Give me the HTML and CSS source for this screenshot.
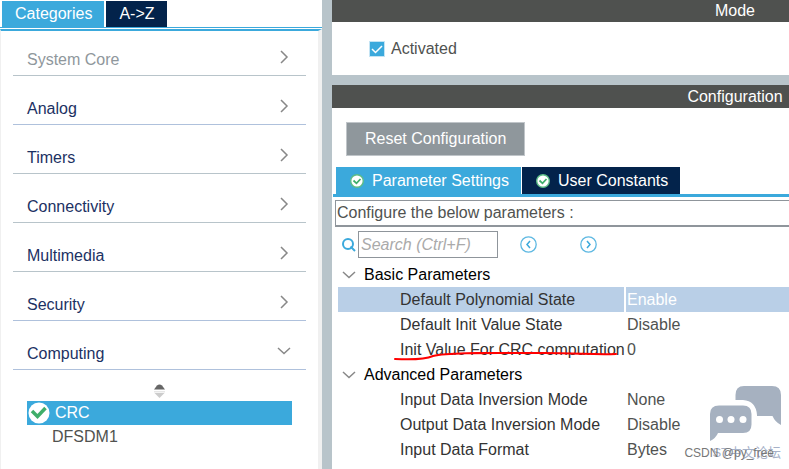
FILE: index.html
```html
<!DOCTYPE html>
<html lang="en">
<head>
    <meta charset="UTF-8">
    <meta name="viewport" content="width=device-width, initial-scale=1.0">
    <title>CRC Mode and Configuration</title>
    <link rel="stylesheet" href="styles.css">
</head>
<body>
    <!-- shared icons -->
    <svg class="sprite" width="0" height="0">
        <symbol id="chevron-right" viewBox="0 0 14 14">
            <path d="M4 1 L10 7 L4 13" fill="none" stroke="#888" stroke-width="1.5"/>
        </symbol>
        <symbol id="chevron-down" viewBox="0 0 14 14">
            <path d="M1 4 L7 9.500 L13 4" fill="none" stroke="#888" stroke-width="1.500"/>
        </symbol>
        <symbol id="check" viewBox="0 0 22 22">
            <circle cx="11" cy="11" r="10.500" fill="#fff"/>
            <path d="M4 9 L9.500 14.500 L17.500 6" fill="none" stroke="#3fae6a" stroke-width="3.500"/>
        </symbol>
        <symbol id="check-ring" viewBox="0 0 14 14">
            <circle cx="7" cy="7" r="6.300" fill="#fff" stroke="#5cbc86" stroke-width="1.400"/>
            <path d="M3.500 6.500 L6.500 9.300 L10.500 5" fill="none" stroke="#3fae6a" stroke-width="1.800"/>
        </symbol>
    </svg>

    <div class="layout">
        <aside class="sidebar">
            <div class="tabs sidebar-tabs">
                <button class="tab active">Categories</button>
                <button class="tab">A-&gt;Z</button>
            </div>
            <div class="sidebar-body">
                <ul class="categories">
                    <li class="category disabled">System Core<svg class="chevron"><use href="#chevron-right"/></svg></li>
                    <li class="category focused">Analog<svg class="chevron"><use href="#chevron-right"/></svg></li>
                    <li class="category">Timers<svg class="chevron"><use href="#chevron-right"/></svg></li>
                    <li class="category">Connectivity<svg class="chevron"><use href="#chevron-right"/></svg></li>
                    <li class="category">Multimedia<svg class="chevron"><use href="#chevron-right"/></svg></li>
                    <li class="category focused">Security<svg class="chevron"><use href="#chevron-right"/></svg></li>
                    <li class="category focused">Computing<svg class="chevron"><use href="#chevron-down"/></svg></li>
                </ul>
                <div class="peripherals">
                    <svg class="sorter" viewBox="0 0 11 14">
                        <path d="M0 5.500 L3 1.500 Q5.500 -0.500 8 1.500 L11 5.500 Z" fill="#666"/>
                        <path d="M0 7 H11 V8.500 H0 Z" fill="#e6e6e6"/>
                        <path d="M0.500 9 H10.500 L7 12.500 L5.500 14 L4 12.500 Z" fill="#ccc"/>
                    </svg>
                    <ul class="peripheral-list">
                        <li class="peripheral selected"><svg class="check"><use href="#check"/></svg>CRC</li>
                        <li class="peripheral">DFSDM1</li>
                    </ul>
                </div>
            </div>
        </aside>

        <main class="content">
            <section class="panel">
                <h2 class="panel-title">Mode</h2>
                <div class="mode-body">
                    <label class="activated"><input type="checkbox" checked>Activated</label>
                </div>
            </section>

            <section class="panel config">
                <h2 class="panel-title">Configuration</h2>
                <div class="config-body">
                    <button class="btn-reset">Reset Configuration</button>
                    <div class="tabs config-tabs">
                        <button class="tab active"><svg class="check-ring"><use href="#check-ring"/></svg>Parameter Settings</button>
                        <button class="tab"><svg class="check-ring"><use href="#check-ring"/></svg>User Constants</button>
                    </div>
                    <div class="settings">
                        <p class="hint">Configure the below parameters :</p>
                        <div class="search-bar">
                            <svg class="search-icon" viewBox="0 0 15 15">
                                <circle cx="7" cy="7" r="5" fill="none" stroke="#3ba9dc" stroke-width="2"/>
                                <path d="M9.500 9.500 L14 14" stroke="#3ba9dc" stroke-width="2"/>
                            </svg>
                            <input type="text" class="search" placeholder="Search (Ctrl+F)" aria-label="Search">
                            <button class="btn-nav" aria-label="Previous">
                                <svg viewBox="0 0 17 17"><circle cx="8.500" cy="8.500" r="7.700" fill="none" stroke="#5db8e2" stroke-width="1.300"/><path d="M10 5 L7 8.500 L10 12" fill="none" stroke="#3ba9dc" stroke-width="1.500"/></svg>
                            </button>
                            <button class="btn-nav" aria-label="Next">
                                <svg viewBox="0 0 17 17"><circle cx="8.500" cy="8.500" r="7.700" fill="none" stroke="#5db8e2" stroke-width="1.300"/><path d="M7 5 L10 8.500 L7 12" fill="none" stroke="#3ba9dc" stroke-width="1.500"/></svg>
                            </button>
                        </div>
                        <table class="params">
                            <colgroup>
                                <col class="col-name">
                                <col>
                            </colgroup>
                            <tbody>
                                <tr>
                                    <th colspan="2"><svg class="chevron"><use href="#chevron-down"/></svg>Basic Parameters</th>
                                </tr>
                                <tr class="selected">
                                    <td class="name">Default Polynomial State</td>
                                    <td class="value">Enable</td>
                                </tr>
                                <tr>
                                    <td class="name">Default Init Value State</td>
                                    <td class="value">Disable</td>
                                </tr>
                                <tr>
                                    <td class="name marked">Init Value For CRC computation
                                        <svg class="underline" viewBox="0 0 224 10"><path d="M1 7 C20 8 32 7 39 4 C55 0 100 1 150 1 C185 1 200 3 222 2" fill="none" stroke="#f00" stroke-width="2" stroke-linecap="round"/></svg>
                                    </td>
                                    <td class="value">0</td>
                                </tr>
                                <tr>
                                    <th colspan="2"><svg class="chevron"><use href="#chevron-down"/></svg>Advanced Parameters</th>
                                </tr>
                                <tr>
                                    <td class="name">Input Data Inversion Mode</td>
                                    <td class="value">None</td>
                                </tr>
                                <tr>
                                    <td class="name">Output Data Inversion Mode</td>
                                    <td class="value">Disable</td>
                                </tr>
                                <tr>
                                    <td class="name">Input Data Format</td>
                                    <td class="value">Bytes</td>
                                </tr>
                            </tbody>
                        </table>
                    </div>
                </div>
            </section>
        </main>

        <div class="watermark">
            <svg class="bubbles" viewBox="0 0 71 56">
                <path d="M25.500 14 V9 Q25.500 0 34 0 H62 Q71 0 71 9 V39 Q65 36 62.500 30 H47 V29 Q46 15 33 14 Z" fill="#a6b1c0"/>
                <path d="M9 19.500 H33 Q41.500 19.500 41.500 28 V38.500 Q41.500 47 33 47 H8 Q6 52 0 55 V28 Q0 19.500 9 19.500 Z" fill="#a6b1c0"/>
                <circle cx="9.500" cy="33.500" r="3.500" fill="#fff"/>
                <circle cx="21" cy="33.500" r="3.500" fill="#fff"/>
                <circle cx="33" cy="33.500" r="3.500" fill="#fff"/>
            </svg>
            <span class="forum">ST中文论坛</span>
            <span class="credit">CSDN @py_free</span>
        </div>
    </div>
</body>
</html>
```

FILE: styles.css
```css
* { box-sizing: border-box; }
body { margin: 0; font-family: "Liberation Sans", Arial, sans-serif; font-size: 16px; line-height: 20px; color: #505250; background: #fff; }
ul { list-style: none; margin: 0; padding: 0; }
button, input { font: inherit; }
.sprite { position: absolute; }

.layout { position: relative; display: grid; grid-template-columns: 322px minmax(0, 1fr); column-gap: 10px; min-height: 100vh; background: #b8c4ca; overflow: hidden; }

/* Tabs */
.tabs { display: flex; gap: 1px; }
.tab { display: flex; align-items: center; gap: 8px; height: 26px; padding: 0 12px 0 13px; border: none; background: #03234b; color: #fff; cursor: pointer; }
.tab.active { background: #3ba9dc; }

/* Categories */
.sidebar { display: flex; flex-direction: column; background: #fff; }
.sidebar-tabs { gap: 2px; padding: 1px 2px 0; border-bottom: 1px solid #3ba9dc; }
.sidebar-body { flex: 1; margin-top: 1px; padding: 19px 12px 0; border: solid #f0f0f0; border-width: 0 4px 0 1px; border-top: 2px solid #3ba9dc; }
.categories { display: flex; flex-direction: column; gap: 23px; }
.category { display: flex; justify-content: space-between; padding: 0 15px 5px 14px; border-bottom: 1px solid #b8c4ca; color: #1c3163; }
.category.disabled { color: #8f979c; }
.category.focused { border-bottom-color: #afc1dc; }
.chevron { flex: none; width: 14px; height: 14px; }
.peripherals { display: flex; flex-direction: column; gap: 3px; padding: 14px 14px 0; }
.sorter { align-self: center; width: 11px; height: 14px; }
.peripheral { display: flex; align-items: center; gap: 5px; height: 24px; padding-left: 25px; }
.peripheral.selected { padding-left: 1px; background: #3ba9dc; color: #fff; }
.check { width: 22px; height: 22px; }

/* Mode and configuration */
.content { display: flex; flex-direction: column; gap: 10px; }
.panel { min-width: 806px; background: #fff; }
.panel-title { margin: 0; padding: 1px 0; background: #4f514f; color: #fff; font-size: 16px; font-weight: normal; text-align: center; }
.config .panel-title { padding: 2px 0 1px; }
.mode-body { display: flex; padding: 17px 37px 16px; }
.activated { display: flex; align-items: center; gap: 6px; }
.activated input { appearance: none; width: 16px; height: 16px; margin: 0; border: 1px solid #c4e4f4; background: #3ba9dc url("data:image/svg+xml,%3Csvg xmlns='http://www.w3.org/2000/svg' viewBox='0 0 14 14'%3E%3Cpath d='M2 7l3.500 3.500L12 4' fill='none' stroke='white' stroke-width='1.500'/%3E%3C/svg%3E"); }
.config { flex: 1; }
.config-body { padding: 14px 0 0 1px; }
.btn-reset { height: 34px; margin-left: 13px; padding: 0 18px; border: 1px solid #c0c5c9; background: #8f979c; color: #fff; }
.config-tabs { margin-top: 11px; padding-left: 3px; border-bottom: 3px solid #3ba9dc; }
.config-tabs .tab { height: 27px; padding: 0 12px 0 14px; }
.check-ring { width: 14px; height: 14px; }

.settings { padding: 3px 0 0 2px; }
.hint { margin: 0; padding: 2px 1px; border: 1px solid #8f959b; border-bottom-width: 2px; }
.search-bar { display: flex; align-items: center; padding: 4px 6px; }
.search-icon { width: 15px; height: 15px; margin-right: 2px; }
.search { width: 140px; height: 27px; padding: 0 2px; border: 1px solid #8f959b; color: #505250; }
.search::placeholder { color: #aaa; font-style: italic; }
.btn-nav { width: 17px; height: 17px; margin-left: 22px; padding: 0; border: none; background: none; cursor: pointer; }
.btn-nav + .btn-nav { margin-left: 43px; }
.btn-nav svg { display: block; }

.params { width: 100%; padding-left: 3px; border-spacing: 0; table-layout: fixed; }
.col-name { width: 288px; }
.params th, .params td { height: 25px; padding: 1px 0 0; font-weight: normal; text-align: left; white-space: nowrap; }
.params th { color: #000; }
.params th .chevron { margin: 0 8px 0 4px; vertical-align: -2px; }
.params .name { padding-left: 62px; border-right: 2px solid #fff; color: #333; }
.params .value { padding-left: 1px; }
.params .selected td { background: #b9cfe7; background-clip: padding-box; }
.params .selected .value { color: #fff; }
.marked { position: relative; }
.underline { position: absolute; left: 56px; top: 15px; width: 224px; height: 10px; }

/* Watermark */
.watermark { position: absolute; right: 8px; bottom: 6px; display: grid; justify-items: end; font-size: 12px; }
.bubbles { width: 71px; height: 56px; margin-bottom: 1px; }
.forum, .credit { grid-area: 2 / 1; }
.forum { color: #a6b1c8; font-family: "Liberation Sans", "Noto Sans CJK SC", sans-serif; font-size: 13px; }
.credit { margin-right: 7px; color: #777; }
```
